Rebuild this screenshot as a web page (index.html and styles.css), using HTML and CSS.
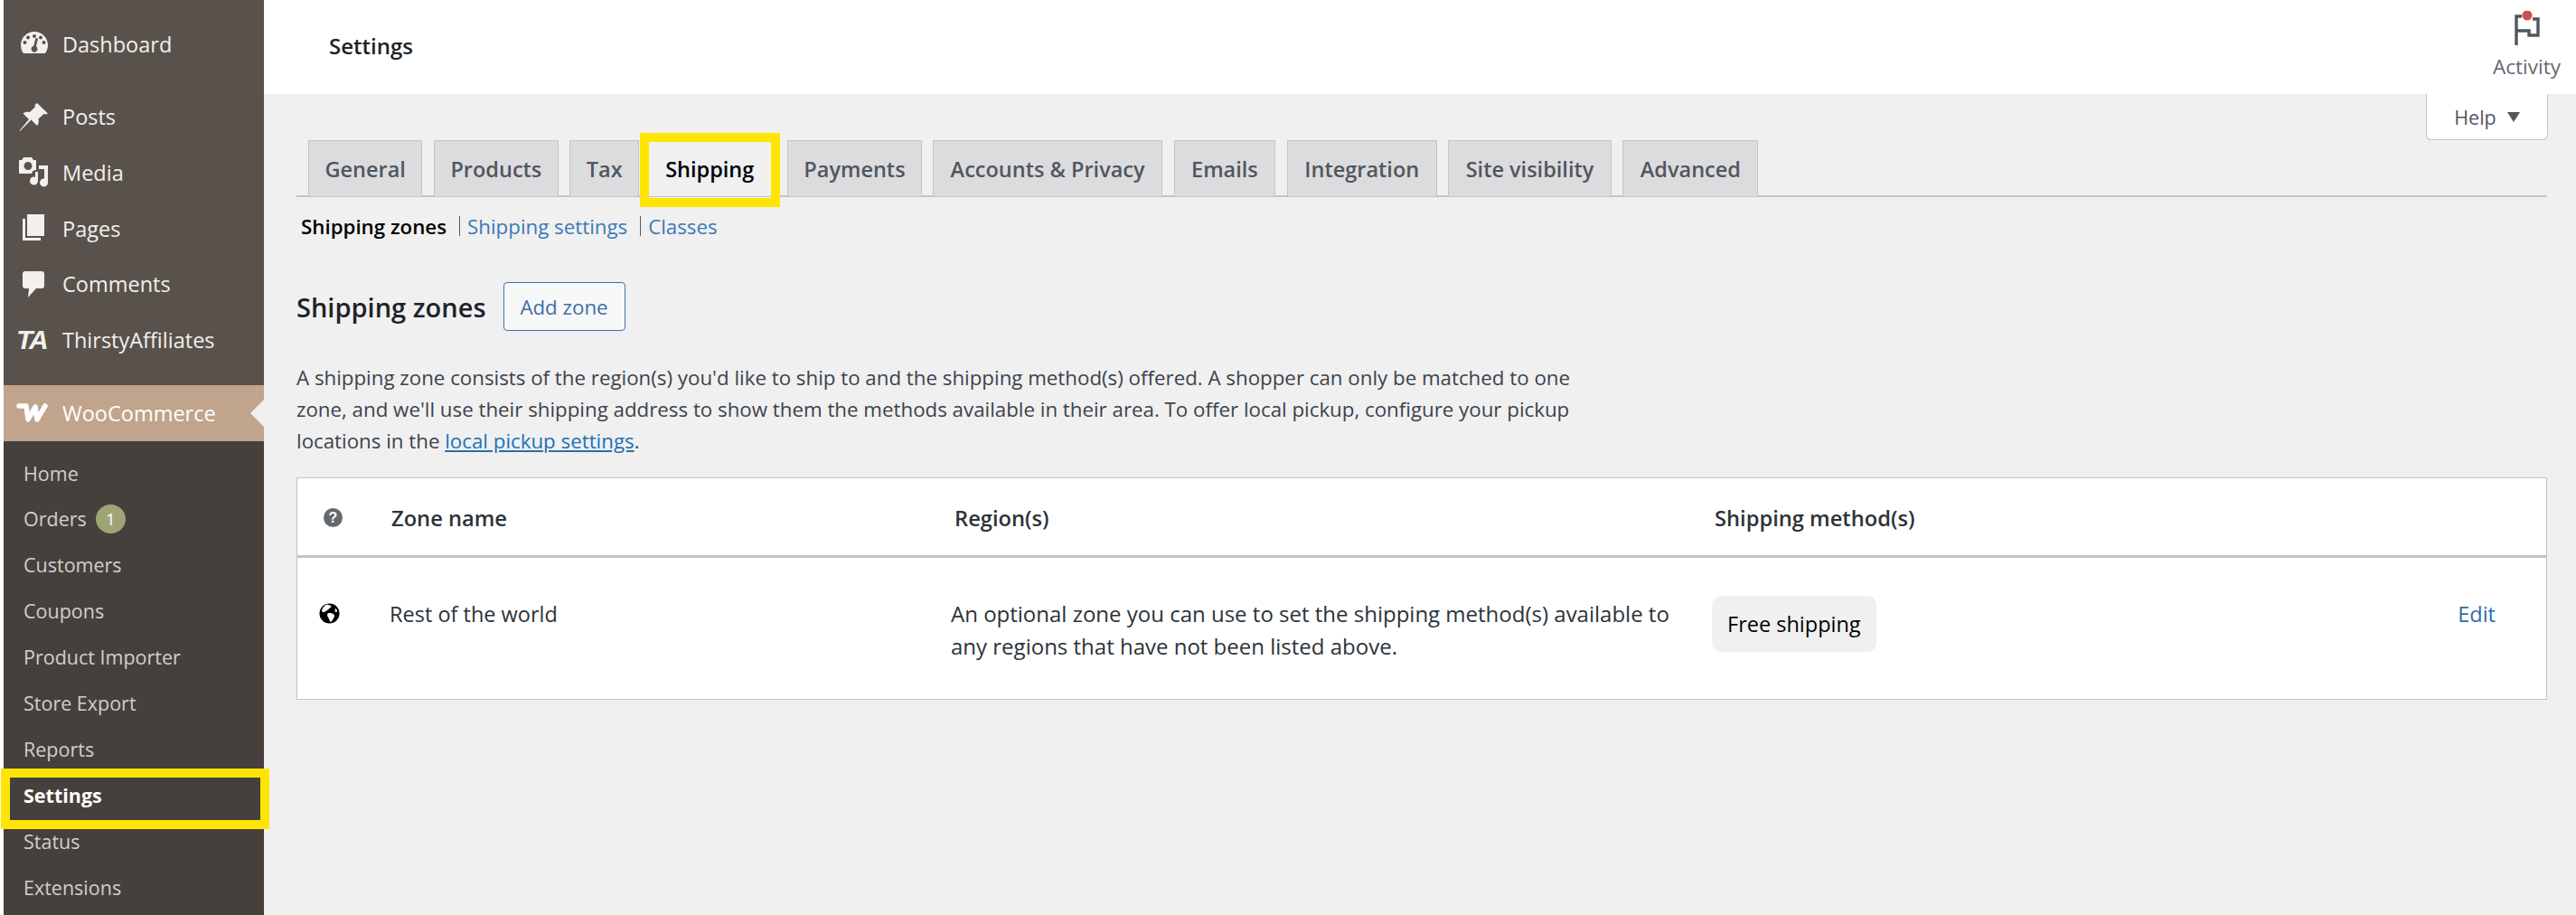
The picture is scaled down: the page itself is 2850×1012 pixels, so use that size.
FILE: index.html
```html
<!DOCTYPE html>
<html lang="en">
<head>
<meta charset="utf-8">
<title>Settings</title>
<link rel="stylesheet" href="styles.css">
</head>
<body>
<div class="page">
  <nav class="sidebar">
    <ul class="menu menu-first">
      <li class="item"><svg class="icon" viewBox="0 0 32 26"><path fill-rule="evenodd" d="M16 1C7.700 1 1 7.700 1 16c0 3.400 1.100 6.500 3 9h24c1.900-2.500 3-5.600 3-9 0-8.300-6.700-15-15-15zM9 5.500a2 2 0 1 1 0 4 2 2 0 0 1 0-4zm7-1.500a2 2 0 1 1 0 4 2 2 0 0 1 0-4zm7 1.500a2 2 0 1 1 0 4 2 2 0 0 1 0-4zM5.500 11a2 2 0 1 1 0 4 2 2 0 0 1 0-4zm21 0a2 2 0 1 1 0 4 2 2 0 0 1 0-4zM20 8.500l-2 8.800a3.500 3.500 0 1 1-2.800-.5L17.500 8z"/></svg><span>Dashboard</span></li>
    </ul>
    <ul class="menu menu-second">
      <li class="item"><svg class="icon" viewBox="0 0 34 33"><path d="M21 1l12 11.500-2.500 1-2-.5-6 5.500c.8 3 .2 5.500-1.500 7.500l-6.500-6.500L2 32l-.5-.5L12 19l-6.500-6.500c2-1.800 4.500-2.300 7.500-1.500l6-6-.5-2z"/></svg><span>Posts</span></li>
      <li class="item"><svg class="icon" viewBox="0 0 34 33"><path fill-rule="evenodd" d="M6 0h9l2 3h3v11c-2.500 0-4.500 1.500-5 4H1V3h3zm5 5a4.500 4.500 0 1 0 0 9 4.500 4.500 0 0 0 0-9z"/><path d="M23 9h10v19a4.500 4.500 0 1 1-4-4.400V13h-6zM19 16h3v10a4.500 4.500 0 1 1-3-4.200z"/></svg><span>Media</span></li>
      <li class="item"><svg class="icon" viewBox="0 0 34 33"><path d="M10 1h19v24H10z"/><path d="M5 6h3v21h17v3H5z"/></svg><span>Pages</span></li>
      <li class="item"><svg class="icon" viewBox="0 0 34 33"><path d="M8 2h18c2 0 3 1 3 3v13c0 2-1 3-3 3h-6l-9 10 1-10H8c-2 0-3-1-3-3V5c0-2 1-3 3-3z"/></svg><span>Comments</span></li>
      <li class="item"><b class="logo-ta">TA</b><span>ThirstyAffiliates</span></li>
    </ul>
    <div class="woo">
      <svg class="logo-w" viewBox="0 0 36 22"><path fill="none" stroke="#fff" stroke-width="5.500" stroke-linejoin="round" stroke-linecap="round" d="M3 3h8l2 15L21 4l2 14L32 3"/></svg><span>WooCommerce</span>
    </div>
    <ul class="submenu">
      <li>Home</li>
      <li>Orders <span class="count">1</span></li>
      <li>Customers</li>
      <li>Coupons</li>
      <li>Product Importer</li>
      <li>Store Export</li>
      <li>Reports</li>
      <li class="current">Settings</li>
      <li>Status</li>
      <li>Extensions</li>
    </ul>
  </nav>
  <div class="main">
    <header class="topbar">
      <h1>Settings</h1>
      <div class="activity">
        <span class="flag"><svg viewBox="0 0 28 38" width="28" height="38"><path fill="none" stroke="#50575e" stroke-width="3.400" d="M2 38V6h6M2 22h14v5h10V9h-6"/><circle cx="14" cy="5" r="5.500" fill="#cc5050"/></svg></span>
        <span>Activity</span>
      </div>
    </header>
    <div class="content">
      <div class="help">Help <i class="tri"></i></div>
      <div class="tabs">
        <a class="tab">General</a>
        <a class="tab">Products</a>
        <a class="tab">Tax</a>
        <a class="tab active">Shipping</a>
        <a class="tab">Payments</a>
        <a class="tab">Accounts &amp; Privacy</a>
        <a class="tab">Emails</a>
        <a class="tab">Integration</a>
        <a class="tab">Site visibility</a>
        <a class="tab">Advanced</a>
      </div>
      <div class="subnav">
        <b>Shipping zones</b><i class="sep"></i><a>Shipping settings</a><i class="sep"></i><a>Classes</a>
      </div>
      <div class="title-row">
        <h2>Shipping zones</h2>
        <a class="button">Add zone</a>
      </div>
      <p class="intro">A shipping zone consists of the region(s) you'd like to ship to and the shipping method(s) offered. A shopper can only be matched to one zone, and we'll use their shipping address to show them the methods available in their area. To offer local pickup, configure your pickup locations in the <a>local pickup settings</a>.</p>
      <div class="table">
        <div class="row head">
          <div class="c-icon"><span class="q">?</span></div>
          <div class="c-name">Zone name</div>
          <div class="c-region">Region(s)</div>
          <div class="c-method">Shipping method(s)</div>
        </div>
        <div class="row body">
          <div class="c-icon"><svg class="globe" viewBox="0 0 24 24"><circle cx="12" cy="12" r="11.500"/><path fill="#fff" d="M9 1.500c2 1 4 .5 5 2 .5 1.500-2 2-3 3.500-1 1.500-3 1.500-4 3-.5 1-3 .5-4-1 1-3.500 3-6.500 6-7.500zM10 12c2-1 5-.5 7 1 1 1 1 2.500 0 4-1 2-2 4-4 5-1-2-1.500-4-2.500-5.500-1-1.500-1.500-3-.5-4.500zM19 6c1 1 2 2.500 2 4l-2 .5c-.5-1.500-1-3 0-4.500z"/></svg></div>
          <div class="c-name">Rest of the world</div>
          <div class="c-region">An optional zone you can use to set the shipping method(s) available to any regions that have not been listed above.</div>
          <div class="c-method"><span class="pill">Free shipping</span></div>
          <a class="c-edit">Edit</a>
        </div>
      </div>
    </div>
  </div>
</div>
</body>
</html>
```
FILE: styles.css
```css
* { box-sizing: border-box; }
html, body { margin: 0; height: 100%; overflow: hidden; }
body { font-family: "Open Sans", "Noto Sans", sans-serif; font-size: 23.500px; background: #fff; color: #2c3338; }
ul { list-style: none; margin: 0; padding: 0; }
h1, h2, p { margin: 0; }
.page { display: flex; height: 1012px; padding-left: 4px; }

/* sidebar */
.sidebar { width: 288px; flex: none; background: #46403c; color: #f1f0ee; display: flex; flex-direction: column; position: relative; z-index: 1; }
.menu, .woo, .submenu { flex: none; }
.menu { background: #59524c; }
.menu-first { padding-top: 18px; padding-bottom: 19px; }
.menu-second { padding-bottom: 19px; }
.item { display: flex; align-items: center; height: 61.600px; padding-left: 16px; gap: 15px; }
.icon { width: 34px; height: 33px; fill: #f1f0ee; flex: none; }
.menu-first .icon { width: 32px; height: 26px; margin-left: 2px; margin-bottom: 4px; }
.logo-ta { width: 36px; margin-left: -2px; margin-right: 0; font: italic 900 30px/1 "Liberation Sans", Arial, sans-serif; letter-spacing: -2px; color: #f1f0ee; }
.woo { height: 62px; background: #c0a48c; color: #fff; display: flex; align-items: center; padding-left: 14px; gap: 15px; position: relative; }
.woo::after { content: ""; position: absolute; right: 0; top: 16px; border: 15px solid transparent; border-right-color: #f0f0f1; border-left-width: 0; }
.logo-w { width: 36px; height: 22px; flex: none; }
.submenu { padding-top: 10px; color: #d1cfcd; font-size: 21.500px; }
.submenu li { height: 50.900px; display: flex; align-items: center; padding-left: 22px; gap: 10px; }
.submenu .current { color: #fff; font-weight: 700; position: relative; }
.submenu .current::after { content: ""; position: absolute; left: -3px; right: -6px; top: -4px; bottom: -12px; border: 10px solid #ffe600; }
.count { width: 33px; height: 32px; border-radius: 50%; background: #9ea476; color: #fff; font-size: 18px; display: flex; align-items: center; justify-content: center; }

/* main */
.main { flex: 1; min-width: 0; display: flex; flex-direction: column; }
.topbar { height: 104px; flex: none; background: #fff; display: flex; justify-content: space-between; padding-left: 72px; }
.topbar h1 { font-size: 24px; font-weight: 600; color: #1d2327; line-height: 102px; }
.activity { display: flex; flex-direction: column; align-items: center; color: #646970; font-size: 22.500px; padding-top: 12px; margin-right: 17px; }
.flag { height: 38px; padding-left: 0; margin-bottom: 8px; }
.content { flex: 1; background: #f0f0f1; padding: 51px 32px 0 36px; position: relative; }
.help { position: absolute; right: 31px; top: 0; width: 135px; height: 51px; background: #fff; border: 1px solid #c3c4c7; border-top: 0; border-radius: 0 0 6px 6px; display: flex; align-items: center; justify-content: center; gap: 12px; color: #50575e; font-size: 21.500px; }
.tri { border: 7px solid transparent; border-top: 11px solid #50575e; border-bottom: 0; }

.tabs { display: flex; gap: 12.500px; border-bottom: 2px solid #c3c4c7; height: 63px; padding-left: 13px; }
.tab { height: 62px; border: 1px solid #c3c4c7; border-bottom: 0; background: #dcdcde; color: #50575e; font-weight: 600; font-size: 23.500px; padding: 0 18.500px; display: flex; align-items: center; position: relative; }
.tab:nth-child(-n+3) { padding: 0 17.500px; }
.tab:nth-child(5) { padding: 0 17px; }
.tab.active { background: #f0f0f1; color: #000; border-color: transparent; margin: 0 5px 0 -3px; }
.tab.active::after { content: ""; position: absolute; left: -10px; right: -10px; top: -9px; bottom: -12px; border: 10px solid #ffe600; }

.subnav { display: flex; align-items: center; height: 34px; margin-top: 15px; padding-left: 5px; font-size: 22.300px; }
.subnav b { color: #000; font-weight: 600; }
.subnav a { color: #3b7ab5; }
.sep { width: 1px; height: 22px; background: #50575e; margin: 0 8px 0 14px; }

.title-row { display: flex; align-items: center; gap: 19px; margin-top: 45px; height: 54px; }
h2 { font-size: 29px; font-weight: 600; color: #1d2327; }
.button { height: 54px; width: 135px; display: flex; align-items: center; justify-content: center; border: 1px solid #3f6fa8; border-radius: 4px; background: #f6f7f7; color: #3f6fa8; font-size: 22.300px; }

.intro { width: 1425px; margin-top: 34px; line-height: 35px; font-size: 22.300px; color: #3c434a; }
.intro a { color: #2271b1; text-decoration: underline; }

.table { margin-top: 23px; border: 1px solid #c3c4c7; background: #fff; height: 246px; }
.row { display: grid; grid-template-columns: 104px 623px 841px 1fr; position: relative; }
.head { height: 88px; padding-top: 2px; border-bottom: 3px solid #c3c4c7; align-items: center; font-weight: 600; font-size: 23.700px; color: #2c3338; }
.head .c-icon { padding-left: 29px; display: flex; }
.q { width: 21px; height: 21px; border-radius: 50%; background: #646970; color: #fff; font: 700 16px/21px "Liberation Sans", sans-serif; text-align: center; }
.body { padding-top: 44px; line-height: 36px; }
.body .c-icon { padding-left: 24px; padding-top: 6px; }
.body .c-name { margin-left: -2px; }
.body .c-region { margin-left: -4px; width: 810px; font-size: 24px; }
.body .c-method { margin-left: -3px; display: flex; align-items: flex-start; }
.globe { width: 23px; height: 23px; fill: #000; display: block; }
.pill { display: flex; align-items: center; height: 62px; padding: 0 17px; margin-top: -2px; background: #f0f0f1; border-radius: 10px; color: #000; }
.c-edit { position: absolute; right: 56px; top: 44px; color: #2f6ea5; }
```
